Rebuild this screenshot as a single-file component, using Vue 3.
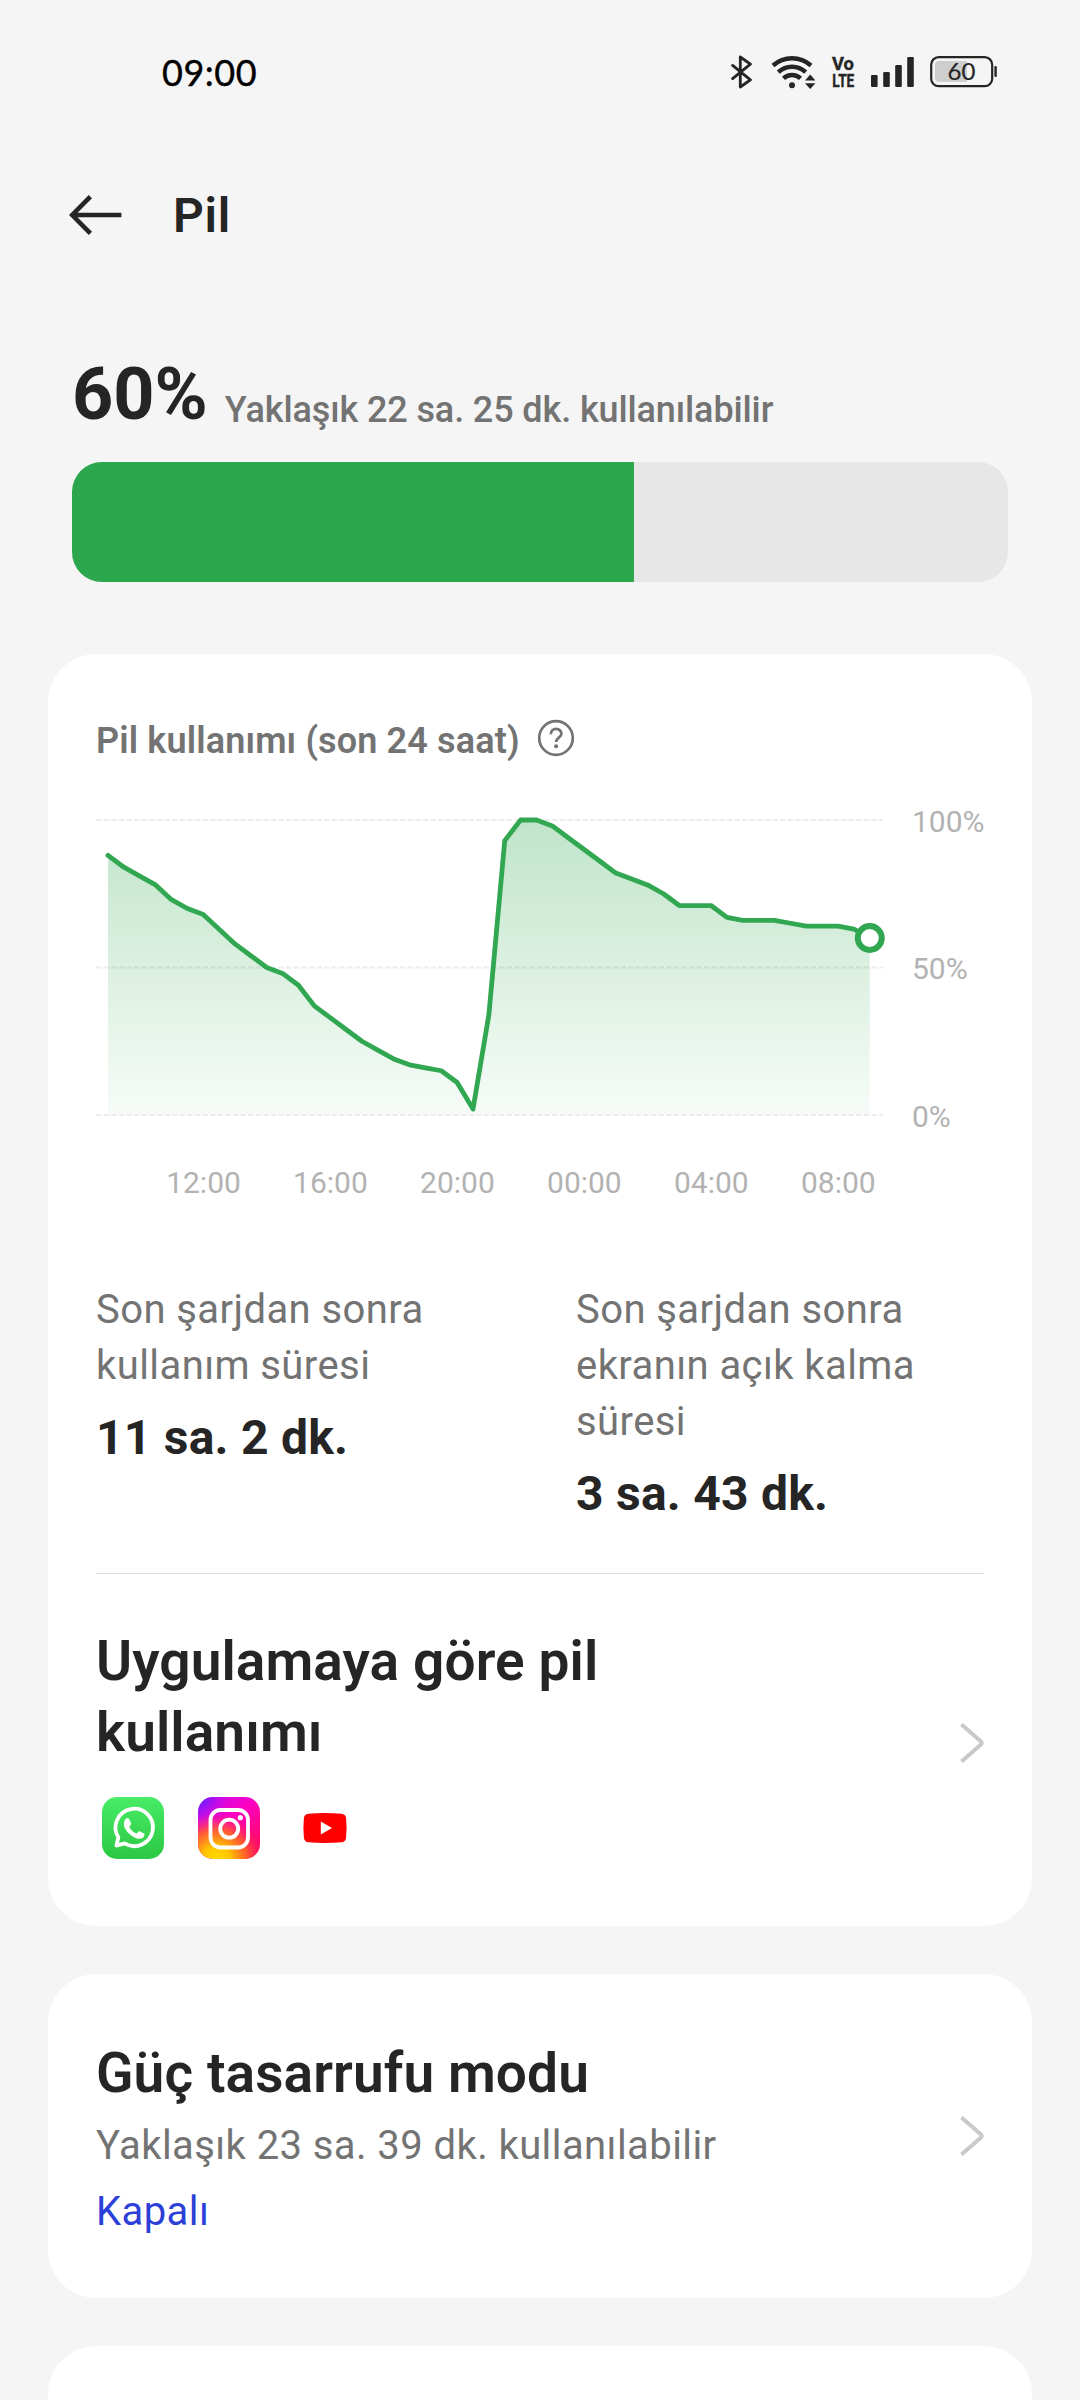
<script setup>
const level = 60

// Battery level sampled every half hour over the last 24 hours
const levels = [
  88, 84, 81, 78, 73, 70, 68, 63, 58, 54, 50, 48, 44, 37, 33, 29, 25, 22, 19, 17,
  16, 15, 11, 2, 34, 93, 100, 100, 98, 94, 90, 86, 82, 80, 78, 75, 71, 71, 71, 67,
  66, 66, 66, 65, 64, 64, 64, 63, 60,
]
const x0 = 12
const step = 15.87
const px = (i) => +(x0 + i * step).toFixed(2)
const py = (v) => +(325 - v * 2.95).toFixed(2)
const points = levels.map((v, i) => `${px(i)},${py(v)}`).join(' ')
const last = { x: px(levels.length - 1), y: py(levels[levels.length - 1]) }
const area = `${x0},325 ${points} ${last.x},325`

const grid = [
  { y: 30, label: '100%' },
  { y: 177.5, label: '50%' },
  { y: 325, label: '0%' },
]
const times = ['12:00', '16:00', '20:00', '00:00', '04:00', '08:00'].map((t, i) => ({
  t,
  x: 107.5 + i * 126.96,
}))

const stats = [
  { label: 'Son şarjdan sonra kullanım süresi', value: '11 sa. 2 dk.' },
  { label: 'Son şarjdan sonra ekranın açık kalma süresi', value: '3 sa. 43 dk.' },
]
</script>

<template>
  <div class="screen">
    <header class="status">
      <span class="clock">09:00</span>
      <div class="status-icons">
        <svg class="bt" width="22" height="34" viewBox="0 0 22 34" fill="none" stroke="#252525" stroke-width="2.8" stroke-linejoin="round" stroke-linecap="round">
          <path d="M1.6 10.4 19.4 24.8 9.3 32V2L19.4 9.2 1.6 23.6" />
        </svg>
        <svg class="wifi" width="46" height="36" viewBox="0 0 46 36">
          <g fill="none" stroke="#252525" stroke-width="4.4">
            <path d="M2 11.5A28.5 28.5 0 0 1 40 11.5" />
            <path d="M7.3 18.2A20 20 0 0 1 34.7 18.2" />
            <path d="M12.5 24.4A12.3 12.3 0 0 1 29.5 24.4" />
          </g>
          <circle cx="21" cy="31.3" r="3" fill="#252525" />
          <path d="M34 26.4 39.2 20.6 44.4 26.4ZM34 29.2H44.4L39.2 35Z" fill="#252525" />
        </svg>
        <svg class="volte" width="24" height="48" viewBox="0 -7 24 48" fill="#252525" stroke="#252525" stroke-width="0.4" font-family="Roboto, sans-serif" font-weight="700">
          <text x="0" y="15.4" font-size="19" textLength="22" lengthAdjust="spacingAndGlyphs">Vo</text>
          <text x="0.3" y="31.5" font-size="18.6" textLength="22" lengthAdjust="spacingAndGlyphs">LTE</text>
        </svg>
        <svg class="signal" width="43" height="30" viewBox="0 0 43 30" fill="#252525">
          <rect x="0" y="18" width="6.6" height="12" rx="1.2" />
          <rect x="12.2" y="15" width="6.6" height="15" rx="1.2" />
          <rect x="24.2" y="8" width="6.6" height="22" rx="1.2" />
          <rect x="36.2" y="0" width="6.6" height="30" rx="1.2" />
        </svg>
        <svg class="battery" width="68" height="32" viewBox="0 0 68 32">
          <rect x="1.2" y="1.2" width="61" height="29" rx="7.5" fill="none" stroke="#252525" stroke-width="2.2" />
          <path d="M9 5H37V26H9A4 4 0 0 1 5 22V9A4 4 0 0 1 9 5Z" fill="#cecece" />
          <rect x="64.4" y="10" width="2.4" height="11" rx="1.2" fill="#252525" />
          <text x="31.5" y="24.4" font-family="Lato, sans-serif" font-size="24" text-anchor="middle" fill="#252525" stroke="#252525" stroke-width="0.2">60</text>
        </svg>
      </div>
    </header>

    <div class="titlebar">
      <svg class="back" width="54" height="42" viewBox="0 0 54 42" fill="none" stroke="#252525" stroke-width="4.6">
        <path d="M52.4 21H4M21.4 2.6 3.2 21 21.4 39.4" />
      </svg>
      <h1>Pil</h1>
    </div>

    <section class="summary">
      <div class="summary-text">
        <strong>{{ level }}%</strong>
        <span>Yaklaşık 22 sa. 25 dk. kullanılabilir</span>
      </div>
      <div class="meter"><div class="meter-fill" :style="{ width: level + '%' }"></div></div>
    </section>

    <main class="cards">
      <section class="card usage">
        <div class="usage-head">
          <h2>Pil kullanımı (son 24 saat)</h2>
          <svg class="help" width="38" height="38" viewBox="0 0 38 38" fill="none" stroke="#737373">
            <circle cx="19" cy="19" r="16.8" stroke-width="2.7" />
            <path d="M13.8 15.2C13.8 8.2 24.4 8.2 24.4 14.8 24.4 18.8 19.1 18.4 19.1 22.9" stroke-width="2.8" />
            <circle cx="19.1" cy="27.2" r="2" fill="#737373" stroke="none" />
          </svg>
        </div>

        <svg class="chart" width="888" height="420" viewBox="0 0 888 420">
          <defs>
            <linearGradient id="fill" gradientUnits="userSpaceOnUse" x1="0" y1="30" x2="0" y2="325">
              <stop offset="0" stop-color="#2da74e" stop-opacity="0.3" />
              <stop offset="1" stop-color="#2da74e" stop-opacity="0.04" />
            </linearGradient>
          </defs>
          <polygon :points="area" fill="url(#fill)" />
          <g v-for="g in grid" :key="g.label">
            <line x1="0" x2="787" :y1="g.y" :y2="g.y" stroke="#000" stroke-opacity="0.07" stroke-width="2" stroke-dasharray="5.6 2" />
            <text class="axis" x="816" :y="g.y + 11.7">{{ g.label }}</text>
          </g>
          <polyline :points="points" fill="none" stroke="#30a750" stroke-width="4.8" stroke-linejoin="round" stroke-linecap="round" />
          <circle :cx="last.x" :cy="last.y" r="12" fill="#fff" stroke="#30a750" stroke-width="6" />
          <text v-for="m in times" :key="m.t" class="axis" :x="m.x" y="403" text-anchor="middle">{{ m.t }}</text>
        </svg>

        <div class="stats">
          <div v-for="s in stats" :key="s.value" class="stat">
            <p>{{ s.label }}</p>
            <strong>{{ s.value }}</strong>
          </div>
        </div>

        <div class="row by-app">
          <div>
            <h3>Uygulamaya göre pil kullanımı</h3>
            <div class="apps">
              <svg width="72" height="72" viewBox="0 0 72 72">
                <defs>
                  <linearGradient id="wa" x1="0" y1="0" x2="0" y2="1">
                    <stop offset="0" stop-color="#48ec66" />
                    <stop offset="1" stop-color="#2bc843" />
                  </linearGradient>
                </defs>
                <rect x="6" y="5" width="62" height="62" rx="15" fill="url(#wa)" />
                <path d="M20.4 53.6 22.4 45.3A18.7 18.7 0 1 1 28.6 51.4Z" fill="none" stroke="#fff" stroke-width="3.8" stroke-linejoin="round" />
                <path d="M30.3 26.6C31.2 25.8 32.6 25.9 33.1 27L35.1 31.6C35.4 32.6 33.9 34 33.2 34.8 34.7 38 37.2 40.3 40.6 41.6 41.6 40.7 42.6 38.9 43.8 39.3L48.4 41.7C49 42.2 47.8 45.3 46.7 46 39.9 49.6 27.1 38.5 27.9 31.4 28 29.4 28.9 27.8 30.3 26.6Z" fill="#fff" />
              </svg>
              <svg width="72" height="72" viewBox="0 0 72 72">
                <defs>
                  <linearGradient id="ig" x1="0.15" y1="0" x2="0.85" y2="1">
                    <stop offset="0" stop-color="#c30cf0" />
                    <stop offset="0.4" stop-color="#ff00c0" />
                    <stop offset="1" stop-color="#ff0a55" />
                  </linearGradient>
                  <radialGradient id="igv" cx="0" cy="0" r="0.5">
                    <stop offset="0" stop-color="#4a22ff" />
                    <stop offset="1" stop-color="#c30cf0" stop-opacity="0" />
                  </radialGradient>
                  <radialGradient id="igy" cx="0.3" cy="1.02" r="0.76">
                    <stop offset="0" stop-color="#ffdc00" />
                    <stop offset="0.3" stop-color="#ffc400" />
                    <stop offset="0.65" stop-color="#ff6a20" stop-opacity="0.85" />
                    <stop offset="1" stop-color="#ff2a60" stop-opacity="0" />
                  </radialGradient>
                </defs>
                <rect x="6" y="5" width="62" height="62" rx="15" fill="url(#ig)" />
                <rect x="6" y="5" width="62" height="62" rx="15" fill="url(#igv)" />
                <rect x="6" y="5" width="62" height="62" rx="15" fill="url(#igy)" />
                <g fill="none" stroke="#fff" stroke-width="3.8">
                  <rect x="18.5" y="18" width="37.5" height="37.5" rx="10" />
                  <circle cx="37.2" cy="36.7" r="9" />
                </g>
                <circle cx="48.3" cy="25.7" r="2.6" fill="#fff" />
              </svg>
              <svg width="72" height="72" viewBox="0 0 72 72">
                <path d="M20.5 21.7Q37 20.4 53.5 21.7Q57.6 22.1 58.1 26Q59.1 36 58.1 45.7Q57.6 49.9 53.5 50.3Q37 51.5 20.5 50.3Q16.4 49.9 15.9 45.7Q14.9 36 15.9 26Q16.4 22.1 20.5 21.7Z" fill="#f00" />
                <path d="M32.8 29.6V42.4L44 36Z" fill="#fff" />
              </svg>
            </div>
          </div>
          <svg class="chevron" width="26" height="42" viewBox="0 0 26 42" fill="none" stroke="#c9c9c9" stroke-width="4" stroke-linejoin="round">
            <path d="M3.5 2.5 23 19.6Q24.6 21 23 22.4L3.5 39.5" />
          </svg>
        </div>
      </section>

      <section class="card saver row">
        <div>
          <h3>Güç tasarrufu modu</h3>
          <p>Yaklaşık 23 sa. 39 dk. kullanılabilir</p>
          <p class="state">Kapalı</p>
        </div>
        <svg class="chevron" width="26" height="42" viewBox="0 0 26 42" fill="none" stroke="#c9c9c9" stroke-width="4" stroke-linejoin="round">
          <path d="M3.5 2.5 23 19.6Q24.6 21 23 22.4L3.5 39.5" />
        </svg>
      </section>

      <section class="card next"></section>
    </main>
  </div>
</template>

<style>
html,
body {
  margin: 0;
  background: #f5f5f5;
}
</style>

<style scoped>
.screen {
  width: 1080px;
  height: 2400px;
  overflow: hidden;
  background: #f5f5f5;
  color: #252525;
  font-family: Roboto, "Noto Sans", sans-serif;
}
h1, h2, h3, p {
  margin: 0;
}
svg {
  display: block;
  flex: none;
}
.status {
  display: flex;
  align-items: center;
  justify-content: space-between;
  height: 144px;
  padding: 0 82px 0 162px;
  box-sizing: border-box;
}
.clock {
  margin-top: -1px;
  font: 400 36px/44px Lato, sans-serif;
  letter-spacing: 0.5px;
  color: #000;
  -webkit-text-stroke: 0.4px #000;
}
.status-icons {
  display: flex;
  align-items: center;
}
.wifi { margin-left: 18px; }
.volte { margin-left: 15px; overflow: visible; }
.signal { margin-left: 15px; }
.battery { margin-left: 16px; }
.titlebar {
  display: flex;
  align-items: center;
  height: 142px;
  padding-left: 69px;
}
h1 {
  margin-left: 50px;
  padding-top: 1px;
  font-size: 48px;
  line-height: 60px;
  font-weight: 600;
  letter-spacing: 0.7px;
}
.summary {
  padding: 67px 72px 0;
}
.summary-text {
  display: flex;
  align-items: flex-start;
  height: 109px;
}
.summary-text strong {
  font-size: 72px;
  line-height: 84px;
  font-weight: 700;
}
.summary-text span {
  margin: 33px 0 0 17px;
  font-size: 36px;
  line-height: 48px;
  font-weight: 500;
  letter-spacing: -0.12px;
  color: #737373;
}
.meter {
  height: 120px;
  border-radius: 30px;
  overflow: hidden;
  background: #e7e7e7;
}
.meter-fill {
  height: 100%;
  background: #2da74e;
}
.cards {
  display: flex;
  flex-direction: column;
  gap: 48px;
  margin: 72px 48px 0;
}
.card {
  box-sizing: border-box;
  border-radius: 48px;
  background: #fff;
  padding: 0 48px;
}
.usage {
  height: 1272px;
  padding-top: 62px;
}
.usage-head {
  display: flex;
  align-items: center;
  height: 48px;
}
h2 {
  padding-top: 1px;
  font-size: 36px;
  line-height: 48px;
  font-weight: 600;
  letter-spacing: 0.14px;
  color: #737373;
}
.help {
  margin: -4px 0 0 17px;
}
.chart {
  margin-top: 26px;
}
.axis {
  font-size: 30px;
  fill: #b2b2b2;
}
.stats {
  display: grid;
  grid-template-columns: 360px 360px;
  column-gap: 120px;
  height: 291px;
  margin-top: 72px;
  border-bottom: 1px solid #dedede;
}
.stat p,
.saver p {
  font-size: 40px;
  line-height: 56px;
  letter-spacing: 0.42px;
  color: #737373;
}
.stat strong {
  display: block;
  margin-top: 16px;
  font-size: 48px;
  line-height: 56px;
  font-weight: 700;
  letter-spacing: 0.25px;
}
.row {
  display: flex;
  align-items: center;
  justify-content: space-between;
}
.by-app {
  padding-top: 52px;
}
.by-app .chevron {
  margin-top: -4px;
}
h3 {
  width: 620px;
  font-size: 55px;
  line-height: 71px;
  font-weight: 600;
  letter-spacing: 0.1px;
}
.apps {
  display: flex;
  gap: 24px;
  margin-top: 24px;
}
.saver {
  height: 324px;
}
.saver h3 {
  padding-top: 6px;
}
.saver p {
  margin-top: 9px;
}
.saver .state {
  margin-top: 10px;
  color: #2c3fd8;
}
.next {
  height: 100px;
}
</style>
